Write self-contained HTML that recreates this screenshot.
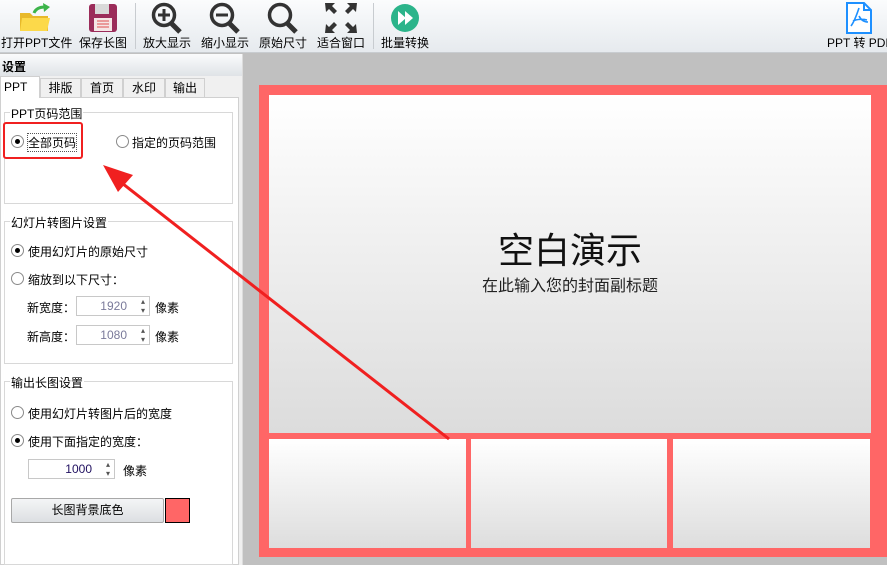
<!DOCTYPE html>
<html><head><meta charset="utf-8"><style>
*{margin:0;padding:0;box-sizing:border-box}
body{width:887px;height:565px;overflow:hidden;background:#c0c0c0;font-family:"Liberation Sans","Noto Sans CJK SC",sans-serif;font-size:12px;color:#000;position:relative}
.a{position:absolute}
#tb{left:0;top:0;width:887px;height:53px;background:linear-gradient(#fbfcfd,#e6eaee);border-bottom:1px solid #c8ccd0}
.tl{position:absolute;top:34px;font-size:12px;white-space:nowrap}
.sep{position:absolute;top:3px;width:1px;height:46px;background:#c8ccd0}
#lp{left:0;top:54px;width:243px;height:511px;background:#f0f0f0;border-right:1px solid #dcdcdc}
.grp{position:absolute;left:4px;width:229px;border:1px solid #d8d8d8;background:#fff}
.gt{position:absolute;left:10px;background:#fff;padding:0 1px;font-size:12px}
.rb{position:absolute;width:13px;height:13px;border:1px solid #8a8a8a;border-radius:50%;background:#fff}
.rb.on::after{content:"";position:absolute;left:3px;top:3px;width:5px;height:5px;border-radius:50%;background:#000}
.t{position:absolute;font-size:12px;white-space:nowrap}
.sp{position:absolute;width:74px;height:20px;border:1px solid #c8c8c8;background:#fff;text-align:right;padding-right:22px;line-height:18px;color:#7a7a9a}
.sp::after{content:"▴\A▾";white-space:pre;position:absolute;right:4px;top:0;font-size:8px;line-height:9px;color:#555}
.tab{position:absolute;top:78px;height:20px;border:1px solid #d0d0d0;border-bottom:none;background:#f0f0f0;text-align:center;line-height:19px}
</style></head><body>
<div id="tb" class="a">
 <svg class="a" style="left:18px;top:3px" width="34" height="30"><path d="M2 10h10l3 3h15v15H2z" fill="#e8b92a"/><path d="M4 15h28l-3 13H2z" fill="#fcd94a"/><path d="M16 10c2-5 7-6 11-6" stroke="#3cb44a" stroke-width="3" fill="none"/><path d="M25 0l7 4-6 5z" fill="#3cb44a"/></svg>
 <svg class="a" style="left:88px;top:3px" width="30" height="30"><rect x="1" y="1" width="28" height="28" rx="3" fill="#9b2c5a"/><rect x="7" y="1" width="14" height="10" fill="#d9d9d9"/><rect x="6" y="15" width="18" height="13" fill="#f5e6e6"/><path d="M9 18h12M9 21h12M9 24h12" stroke="#e05050"/></svg>
 <svg class="a" style="left:150px;top:2px" width="34" height="32"><circle cx="14" cy="13" r="10.5" stroke="#333" stroke-width="3.5" fill="none"/><path d="M21 21l9 9" stroke="#333" stroke-width="5"/><path d="M8 13h12M14 7v12" stroke="#333" stroke-width="3"/></svg>
 <svg class="a" style="left:208px;top:2px" width="34" height="32"><circle cx="14" cy="13" r="10.5" stroke="#333" stroke-width="3.5" fill="none"/><path d="M21 21l9 9" stroke="#333" stroke-width="5"/><path d="M8 13h12" stroke="#333" stroke-width="3"/></svg>
 <svg class="a" style="left:266px;top:2px" width="34" height="32"><circle cx="14" cy="13" r="10.5" stroke="#333" stroke-width="3.5" fill="none"/><path d="M21 21l9 9" stroke="#333" stroke-width="5"/></svg>
 <svg class="a" style="left:324px;top:2px" width="34" height="32" fill="#333"><path d="M1 1h10l-3 3 5 5-3 3-5-5-3 3z"/><path d="M33 1H23l3 3-5 5 3 3 5-5 3 3z"/><path d="M1 31h10l-3-3 5-5-3-3-5 5-3-3z"/><path d="M33 31H23l3-3-5-5 3-3 5 5 3-3z"/></svg>
 <svg class="a" style="left:390px;top:3px" width="30" height="30"><circle cx="15" cy="15" r="14" fill="#2bb48a"/><path d="M8 8l8 7-8 7zM15 8l8 7-8 7z" fill="#fff"/></svg>
 <svg class="a" style="left:845px;top:2px" width="28" height="32"><path d="M2 1h17l7 7v23H2z" fill="#fff" stroke="#1e90ff" stroke-width="2"/><path d="M19 1v7h7" fill="none" stroke="#1e90ff" stroke-width="2"/><path d="M14 6c-2 6-5 14-8 18M14 14c2 4 5 6 9 6M8 19c4-2 10-2 14-1" stroke="#1e90ff" stroke-width="1.6" fill="none"/></svg>
 <div class="tl" style="left:1px">打开PPT文件</div>
 <div class="tl" style="left:79px">保存长图</div>
 <div class="sep" style="left:135px"></div>
 <div class="tl" style="left:143px">放大显示</div>
 <div class="tl" style="left:201px">缩小显示</div>
 <div class="tl" style="left:259px">原始尺寸</div>
 <div class="tl" style="left:317px">适合窗口</div>
 <div class="sep" style="left:373px"></div>
 <div class="tl" style="left:381px">批量转换</div>
 <div class="tl" style="left:827px">PPT 转 PDF</div>
</div>
<div id="lp" class="a">
 <div class="a" style="left:0;top:0;width:242px;height:22px;background:linear-gradient(#fafbfc,#dfe3e7)"></div>
 <div class="t" style="left:2px;top:4px;font-weight:bold">设置</div>
</div>
<div class="a" style="left:0;top:76px;width:40px;height:22px;background:#fff;border:1px solid #d0d0d0;border-bottom:none;z-index:2"><span class="t" style="left:3px;top:3px">PPT</span></div>
<div class="tab" style="left:40px;width:41px">排版</div>
<div class="tab" style="left:81px;width:42px">首页</div>
<div class="tab" style="left:123px;width:42px">水印</div>
<div class="tab" style="left:165px;width:40px">输出</div>
<div class="a" style="left:0;top:97px;width:239px;height:468px;background:#fff;border:1px solid #d0d0d0"></div>
<div class="grp" style="top:112px;height:92px"></div>
<div class="gt" style="top:105px">PPT页码范围</div>
<div class="rb on" style="left:11px;top:135px"></div><div class="t" style="left:28px;top:134px;outline:1px dotted #555">全部页码</div>
<div class="rb" style="left:116px;top:135px"></div><div class="t" style="left:132px;top:134px">指定的页码范围</div>
<div class="a" style="left:3px;top:122px;width:80px;height:37px;border:2.5px solid #f02020;border-radius:3px"></div>
<div class="grp" style="top:221px;height:143px"></div>
<div class="gt" style="top:214px">幻灯片转图片设置</div>
<div class="rb on" style="left:11px;top:244px"></div><div class="t" style="left:28px;top:243px">使用幻灯片的原始尺寸</div>
<div class="rb" style="left:11px;top:272px"></div><div class="t" style="left:28px;top:271px">缩放到以下尺寸：</div>
<div class="t" style="left:27px;top:299px">新宽度：</div><div class="sp" style="left:76px;top:296px">1920</div><div class="t" style="left:155px;top:299px">像素</div>
<div class="t" style="left:27px;top:328px">新高度：</div><div class="sp" style="left:76px;top:325px">1080</div><div class="t" style="left:155px;top:328px">像素</div>
<div class="grp" style="top:381px;height:184px"></div>
<div class="gt" style="top:374px">输出长图设置</div>
<div class="rb" style="left:11px;top:406px"></div><div class="t" style="left:28px;top:405px">使用幻灯片转图片后的宽度</div>
<div class="rb on" style="left:11px;top:434px"></div><div class="t" style="left:28px;top:433px">使用下面指定的宽度：</div>
<div class="sp" style="left:28px;top:459px;width:87px;color:#201060">1000</div><div class="t" style="left:123px;top:462px">像素</div>
<div class="a" style="left:11px;top:498px;width:153px;height:25px;border:1px solid #a8a8a8;border-radius:2px;background:linear-gradient(#f4f5f6,#dcdfe2);text-align:center;line-height:23px">长图背景底色</div>
<div class="a" style="left:165px;top:498px;width:25px;height:25px;background:#ff6666;border:1px solid #000"></div>
<div class="a" style="left:259px;top:85px;width:628px;height:472px;background:#ff6666"></div>
<div class="a" style="left:269px;top:95px;width:602px;height:338px;background:linear-gradient(#fff,#dcdcdc)"></div>
<div class="t" style="left:269px;top:222px;width:602px;text-align:center;font-size:36px;color:#111">空白演示</div>
<div class="t" style="left:269px;top:272px;width:602px;text-align:center;font-size:16px;color:#222">在此输入您的封面副标题</div>
<div class="a" style="left:269px;top:439px;width:197px;height:109px;background:linear-gradient(#fff,#ddd)"></div>
<div class="a" style="left:471px;top:439px;width:196px;height:109px;background:linear-gradient(#fff,#ddd)"></div>
<div class="a" style="left:673px;top:439px;width:197px;height:109px;background:linear-gradient(#fff,#ddd)"></div>
<svg class="a" style="left:0;top:0" width="887" height="565"><path d="M449 439L118 180" stroke="#f02020" stroke-width="3"/><path d="M103 165l30 10-15 17z" fill="#f02020"/></svg>
</body></html>
